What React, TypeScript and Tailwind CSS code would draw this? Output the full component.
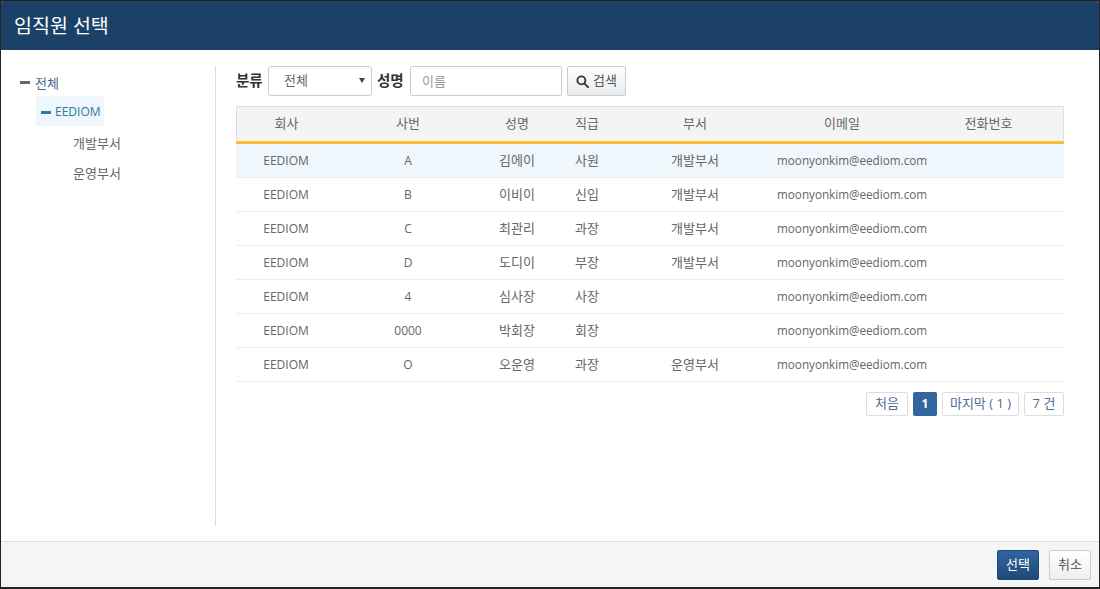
const rows = [
  ["EEDIOM", "A", "김에이", "사원", "개발부서"],
  ["EEDIOM", "B", "이비이", "신입", "개발부서"],
  ["EEDIOM", "C", "최관리", "과장", "개발부서"],
  ["EEDIOM", "D", "도디이", "부장", "개발부서"],
  ["EEDIOM", "4", "심사장", "사장", ""],
  ["EEDIOM", "0000", "박회장", "회장", ""],
  ["EEDIOM", "O", "오운영", "과장", "운영부서"],
];

const headers = ["회사", "사번", "성명", "직급", "부서", "이메일", "전화번호"];

function Minus({ color }: { color: string }) {
  return <span className={`block h-[3px] w-[10px] ${color}`} />;
}

export default function App() {
  return (
    <div className="h-[589px] w-[1100px] overflow-hidden bg-[#222] pt-px pr-px pb-[2px] pl-px font-['Open_Sans','Noto_Sans_CJK_KR',sans-serif] text-[12px] text-[#666]">
      <div className="flex h-full flex-col overflow-hidden rounded-t-[3px] bg-white">
        <header className="flex h-[49px] shrink-0 items-center bg-[#1c4168] pl-[13px] text-[19.5px] text-white">
          임직원 선택
        </header>

        <main className="flex min-h-0 flex-1 pt-[16px] pb-[15px]">
          <aside className="w-[215px] shrink-0 border-r border-[#ddd] pt-[2px] pl-[19px] text-[13px]">
            <div className="flex h-[28px] items-center gap-[5px] pt-[4px] text-[#4a6a8c]">
              <span className="-mt-[3px]">
                <Minus color="bg-[#666]" />
              </span>
              <span>전체</span>
            </div>
            <div className="ml-[16px] flex h-[30px] w-[68px] items-center gap-[4px] bg-[#eff6fc] pt-[2px] pl-[5px] text-[12px] text-[#2a7ba8]">
              <Minus color="bg-[#2a7ba8]" />
              <span>EEDIOM</span>
            </div>
            <div className="mt-[2px] flex h-[30px] items-center pt-[2px] pl-[53px]">개발부서</div>
            <div className="flex h-[30px] items-center pt-[2px] pl-[53px]">운영부서</div>
          </aside>

          <section className="ml-[20px] w-[828px]">
            <form className="flex h-[30px] items-center">
              <label className="w-[27px] text-[14.5px] font-bold whitespace-nowrap text-[#333]">분류</label>
              <div className="relative ml-[5px] flex h-[30px] w-[104px] items-center rounded-[3px] border border-[#ccc] pl-[15px] text-[13px]">
                전체
                <svg viewBox="0 0 6 5" className="absolute top-[11px] right-[6px] h-[5px] w-[6px]" fill="#444">
                  <path d="M0 0h6L3 5z" />
                </svg>
              </div>
              <label className="ml-[5px] w-[28px] text-[14.5px] font-bold whitespace-nowrap text-[#333]">성명</label>
              <input
                placeholder="이름"
                className="ml-[5px] h-[30px] w-[152px] rounded-[2px] border border-[#ccc] pl-[11px] text-[13px] outline-none placeholder:text-[#999]"
              />
              <button
                type="button"
                className="ml-[5px] flex h-[30px] w-[59px] items-center justify-center gap-[4px] rounded-[2px] border border-[#ccc] bg-gradient-to-b from-white to-[#e8ebee] text-[13px] text-[#555]"
              >
                <svg viewBox="0 0 14 14" className="h-[13px] w-[13px]" fill="none" stroke="#333" strokeWidth="2">
                  <circle cx="5.8" cy="5.8" r="4.3" />
                  <path d="M9 9l4 4" strokeLinecap="round" />
                </svg>
                검색
              </button>
            </form>

            <table className="mt-[10px] w-[828px] table-fixed border-separate border-spacing-0">
              <colgroup>
                <col className="w-[100px]" />
                <col className="w-[144px]" />
                <col className="w-[74px]" />
                <col className="w-[66px]" />
                <col className="w-[150px]" />
                <col className="w-[144px]" />
                <col className="w-[150px]" />
              </colgroup>
              <thead>
                <tr className="bg-[#f4f4f4]">
                  {headers.map((h) => (
                    <th
                      key={h}
                      className="h-[38px] border-t border-b-[3px] border-t-[#ddd] border-b-[#fbbd32] text-center text-[13px] font-normal text-[#666] first:border-l first:border-l-[#ddd] last:border-r last:border-r-[#ddd]"
                    >
                      {h}
                    </th>
                  ))}
                </tr>
              </thead>
              <tbody>
                {rows.map((r, i) => (
                  <tr key={i} className={i === 0 ? "bg-[#eff6fc]" : ""}>
                    <td className="h-[34px] border-b border-[#eee] text-center">{r[0]}</td>
                    <td className="border-b border-[#eee] text-center">{r[1]}</td>
                    <td className="border-b border-[#eee] text-center text-[13px]">{r[2]}</td>
                    <td className="border-b border-[#eee] text-center text-[13px]">{r[3]}</td>
                    <td className="border-b border-[#eee] text-center text-[13px]">{r[4]}</td>
                    <td className="border-b border-[#eee] pl-[7px] text-left text-[11.7px] whitespace-nowrap">moonyonkim@eediom.com</td>
                    <td className="border-b border-[#eee]" />
                  </tr>
                ))}
              </tbody>
            </table>

            <nav className="mt-[10px] flex justify-end gap-[5px] text-[13px] text-[#4a6a9c]">
              <span className="flex h-[24px] w-[42px] items-center justify-center rounded-[2px] border border-[#ddd]">처음</span>
              <span className="flex h-[24px] w-[24px] items-center justify-center rounded-[2px] bg-[#31659f] text-[12px] font-bold text-white">1</span>
              <span className="flex h-[24px] w-[77px] items-center justify-center rounded-[2px] border border-[#ddd]">마지막 ( 1 )</span>
              <span className="flex h-[24px] w-[40px] items-center justify-center rounded-[2px] border border-[#ddd]">7 건</span>
            </nav>
          </section>
        </main>

        <footer className="flex h-[46px] shrink-0 items-center justify-end gap-[10px] border-t border-[#ddd] bg-[#f4f5f5] pr-[8px]">
          <button type="button" className="h-[30px] w-[42px] rounded-[2px] border border-[#1f4a78] bg-gradient-to-b from-[#31659f] to-[#1f4a78] text-[13px] text-white">
            선택
          </button>
          <button type="button" className="h-[30px] w-[42px] rounded-[2px] border border-[#ccc] bg-gradient-to-b from-white to-[#eceef0] text-[13px] text-[#555]">
            취소
          </button>
        </footer>
      </div>
    </div>
  );
}
